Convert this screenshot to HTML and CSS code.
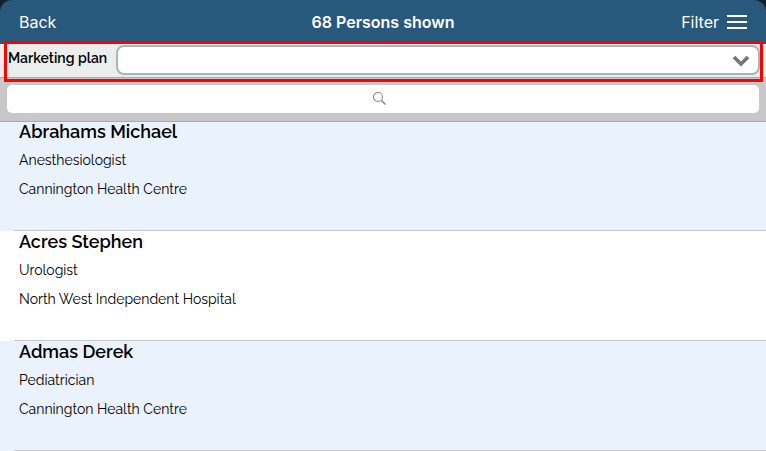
FILE: index.html
```html
<!DOCTYPE html>
<html lang="en">
<head>
    <meta charset="UTF-8">
    <meta name="viewport" content="width=device-width, initial-scale=1.0">
    <title>Persons</title>
    <link rel="stylesheet" href="styles.css">
</head>
<body>
    <header class="navbar">
        <button class="nav-button" type="button">Back</button>
        <h1 class="nav-title">68 Persons shown</h1>
        <button class="nav-button nav-filter" type="button">
            Filter
            <svg class="menu-icon" width="20" height="14" viewBox="0 0 20 14" aria-hidden="true">
                <path d="M0 1h20M0 7h20M0 13h20" stroke="#fff" stroke-width="2"/>
            </svg>
        </button>
    </header>

    <div class="plan-row">
        <label class="plan-label" for="plan">Marketing plan</label>
        <div class="plan-field">
            <select class="plan-select" id="plan">
                <option value=""></option>
            </select>
            <svg class="chevron" width="18" height="12" viewBox="0 0 18 12" aria-hidden="true">
                <path d="M2 2l7 7 7-7" fill="none" stroke="#757575" stroke-width="3.6"/>
            </svg>
        </div>
        <div class="highlight"></div>
    </div>

    <form class="search-bar">
        <input class="search-input" type="search" aria-label="Search">
        <svg class="search-icon" width="14" height="14" viewBox="0 0 14 14" aria-hidden="true">
            <circle cx="5" cy="5" r="4.5" fill="none" stroke="#8e8e93" stroke-width="1.1"/>
            <path d="M8.3 8.3l4.2 4.2" stroke="#8e8e93" stroke-width="1.7"/>
        </svg>
    </form>

    <ul class="persons">
        <li class="person">
            <h2 class="person-name">Abrahams Michael</h2>
            <p class="person-info">Anesthesiologist</p>
            <p class="person-info">Cannington Health Centre</p>
        </li>
        <li class="person">
            <h2 class="person-name">Acres Stephen</h2>
            <p class="person-info">Urologist</p>
            <p class="person-info">North West Independent Hospital</p>
        </li>
        <li class="person">
            <h2 class="person-name">Admas Derek</h2>
            <p class="person-info">Pediatrician</p>
            <p class="person-info">Cannington Health Centre</p>
        </li>
    </ul>
</body>
</html>
```

FILE: styles.css
```css
* {
    box-sizing: border-box;
}

/* dark strip shows behind the rounded corners of the top bar */
html {
    background: linear-gradient(#14202e 12px, #fff 12px);
}

body {
    margin: 0;
    color: #000;
    font-family: Raleway, Lato, sans-serif;
}

h1, h2, p, ul {
    margin: 0;
    padding: 0;
}

/* Top bar */
.navbar {
    display: grid;
    grid-template-columns: 1fr auto 1fr;
    align-items: center;
    height: 44px;
    padding: 0 19px;
    background: #28587b;
    color: #fff;
    font-family: Inter, sans-serif;
    border-radius: 12px 12px 0 0;
}

.nav-button {
    justify-self: start;
    padding: 0;
    border: 0;
    background: none;
    color: inherit;
    font: 400 16px/20px Inter, sans-serif;
}

.nav-filter {
    display: flex;
    justify-self: end;
    align-items: center;
    gap: 8px;
}

.nav-title {
    font-size: 16px;
    line-height: 20px;
    font-weight: 600;
}

/* Marketing plan */
.plan-row {
    position: relative;
    z-index: 1;
    display: flex;
    align-items: center;
    gap: 9px;
    height: 34px;
    padding: 0 6px 2px 8px;
    background: #eceeed;
    border-bottom: 1px solid #a9a9ad;
}

.plan-label {
    padding-bottom: 4px;
    font-size: 14px;
    line-height: 20px;
    font-weight: 600;
}

.plan-field {
    position: relative;
    flex: 1;
}

.plan-select {
    display: block;
    width: 100%;
    height: 30px;
    border: 2px solid #a4b5c3;
    border-radius: 8px;
    background: #fff;
    appearance: none;
}

.chevron {
    position: absolute;
    top: 10px;
    right: 10px;
    pointer-events: none;
}

.highlight {
    position: absolute;
    inset: -3px 3px -5px 4px;
    border: 3px solid #f00;
    pointer-events: none;
}

/* Search */
.search-bar {
    position: relative;
    padding: 7px 7px 8px;
    background: #c8c7cc;
    box-shadow: 0 1px 0 #aaaaae;
}

.search-input {
    display: block;
    width: 100%;
    height: 28px;
    border: 0;
    border-radius: 5px;
    background: #fff;
    font: 400 14px/20px Raleway, sans-serif;
    text-align: center;
}

.search-icon {
    position: absolute;
    top: 14px;
    left: calc(50% - 10px);
    pointer-events: none;
}

/* List */
.persons {
    list-style: none;
}

.person {
    height: 110px;
    padding-left: 19px;
    background: linear-gradient(#c8c7cc, #c8c7cc) 14px 100% / 100% 1px no-repeat;
}

.person:nth-child(odd) {
    background-color: #eaf3fd;
}

.person-name {
    padding-bottom: 3px;
    font-size: 18px;
    line-height: 22px;
    font-weight: 600;
}

.person-info {
    font-size: 14px;
    line-height: 29px;
}
```
